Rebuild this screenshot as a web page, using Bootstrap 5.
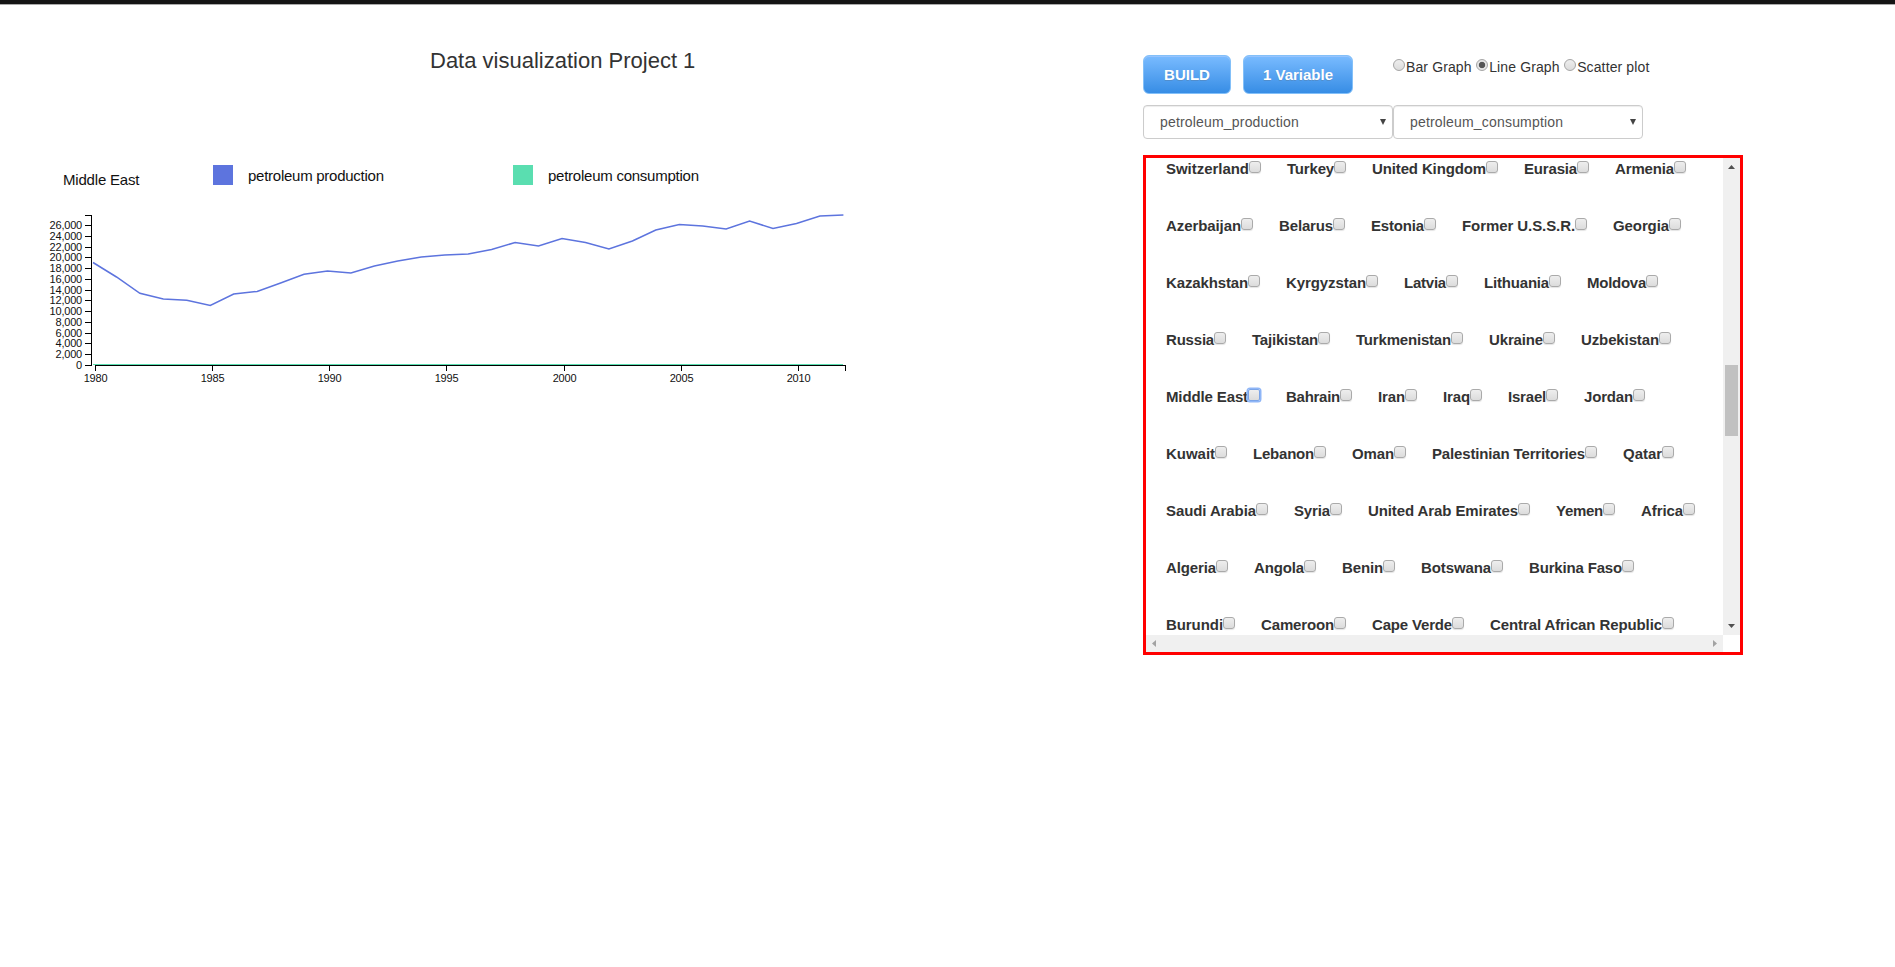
<!DOCTYPE html>
<html lang="en">
<head>
<meta charset="utf-8">
<title>Data visualization Project 1</title>
<link rel="stylesheet" href="https://cdn.jsdelivr.net/npm/bootstrap@5.3.0/dist/css/bootstrap.min.css">
<style>
body{font-family:"Liberation Sans",Arial,sans-serif;font-size:15px;color:#333;line-height:20px;height:967px;overflow:hidden}
.topbar{height:4px;background:#151515;box-shadow:0 1px 0 #aaa}
.chart-col{width:1143px;padding-top:43px}
.page-title{font-size:22px;line-height:28px;font-weight:400;padding-left:430px;margin:0}
.chart{display:block;font-family:"Liberation Sans",Arial,sans-serif}
.tools{width:600px;padding-top:51px}
.build-btn,.build-btn:hover{height:39px;border:1px solid #83c0f9;border-radius:6px;color:#fff;font-weight:700;font-size:15px;line-height:19px;padding:0;background:linear-gradient(#79bbff,#378de5);box-shadow:inset 0 1px 0 #97c4fe;text-shadow:0 1px 0 #528ecc}
.buttons{gap:12px}
.kinds{margin-left:28px;padding-top:2px;font-size:14px;gap:4.5px;letter-spacing:.12px}
.kinds label,.country{display:inline-flex}
.kinds input{appearance:none;width:12px;height:12px;border:1px solid #a5a5a5;border-radius:50%;background:linear-gradient(#eee,#dcdcdc);margin:2px 1px 0 0}
.kinds input:checked{background:radial-gradient(circle,#555 0 2.8px,#e4e4e4 3.6px)}
.picks{margin-top:11px}
.pick{width:250px;height:34px;border:1px solid #ccc;border-radius:4px;font-size:14px;letter-spacing:.18px;color:#555;padding:0 5px 0 16px;box-shadow:inset 0 1px 1px rgba(0,0,0,.075)}
.listbox{width:600px;height:500px;margin-top:16px;border:3px solid red;display:grid;grid-template:477px 17px/577px 17px}
.names{overflow:hidden;padding:1px 0 0 20px}
.names>div{height:57px;gap:25px;white-space:nowrap;font-weight:700}
.country input{appearance:none;width:12px;height:12px;border:1px solid #aaa;border-radius:3px;background:linear-gradient(#eee,#dcdcdc);box-shadow:0 1px 1px #e4e4e4;margin:2px 1px 0 0;flex:none}
.country input.focused{box-shadow:0 0 0 1.5px #8fb6f7;border-color:#7ba4e8;border-radius:2px}
.bar{background:#f0f0f0}
.thumb{width:13px;height:71px;background:#c1c1c1;margin-top:8px}
</style>
<script src="https://cdn.jsdelivr.net/npm/bootstrap@5.3.0/dist/js/bootstrap.bundle.min.js"></script>
</head>
<body class="bg-white">
<div class="topbar"></div>
<div class="d-flex">
<main class="chart-col">
<h1 class="page-title">Data visualization Project 1</h1>
<svg class="chart" id="chart" width="1100" height="320" viewBox="0 75 1100 320">
<rect x="213" y="165" width="20" height="20" fill="#5d74de"/><rect x="513" y="165" width="20" height="20" fill="#5adeb0"/>
<g font-size="15" fill="#111"><text x="63" y="185" textLength="76.5">Middle East</text><text x="248" y="181" textLength="136">petroleum production</text><text x="548" y="181" textLength="151">petroleum consumption</text></g>
</svg>
</main>
<aside class="tools">
<div class="d-flex align-items-start buttons">
<button class="btn build-btn" style="width:88px">BUILD</button>
<button class="btn build-btn" style="width:110px">1 Variable</button>
<div class="d-flex kinds">
<label><input type="radio" name="k">Bar Graph</label><label><input type="radio" name="k" checked>Line Graph</label><label><input type="radio" name="k">Scatter plot</label>
</div>
</div>
<div class="d-flex picks">
<div class="pick d-flex align-items-center justify-content-between">petroleum_production<svg width="8" height="8"><path d="M1 1h6L4 7z" fill="#444"/></svg></div>
<div class="pick d-flex align-items-center justify-content-between">petroleum_consumption<svg width="8" height="8"><path d="M1 1h6L4 7z" fill="#444"/></svg></div>
</div>
<div class="listbox">
<div class="names" id="names"></div>
<div class="bar d-flex flex-column align-items-center justify-content-between"><svg width="17" height="17"><path d="M5 11h7L8.500 7z" fill="#505050"/></svg><div class="thumb"></div><svg width="17" height="17"><path d="M5 6h7L8.500 10z" fill="#505050"/></svg></div>
<div class="bar d-flex justify-content-between"><svg width="17" height="17"><path d="M10 5v7L6 8.500z" fill="#a3a3a3"/></svg><svg width="17" height="17"><path d="M7 5v7L11 8.500z" fill="#a3a3a3"/></svg></div>
</div>
</aside>
</div>
<script>
// each country with the width of its name in pixels
const rows=["Switzerland:83|Turkey:47|United Kingdom:114|Eurasia:53|Armenia:59","Azerbaijan:75|Belarus:54|Estonia:53|Former U.S.S.R.:113|Georgia:56","Kazakhstan:82|Kyrgyzstan:80|Latvia:42|Lithuania:65|Moldova:59","Russia:48|Tajikistan:66|Turkmenistan:95|Ukraine:54|Uzbekistan:78","Middle East:82|Bahrain:54|Iran:27|Iraq:27|Israel:38|Jordan:49","Kuwait:49|Lebanon:61|Oman:42|Palestinian Territories:153|Qatar:39","Saudi Arabia:90|Syria:36|United Arab Emirates:150|Yemen:47|Africa:42","Algeria:50|Angola:50|Benin:41|Botswana:70|Burkina Faso:93","Burundi:57|Cameroon:73|Cape Verde:80|Central African Republic:172"];
document.getElementById("names").innerHTML=rows.map(r=>'<div class="d-flex">'+r.split("|").map(e=>{const [n,w]=e.split(":");return `<label class="country"><span data-w="${w}">${n}</span><input type="checkbox"${n=="Middle East"?' class="focused"':''}></label>`}).join("")+"</div>").join("");
document.querySelectorAll("[data-w]").forEach(e=>{const w=+e.dataset.w,n=e.getBoundingClientRect().width;e.style.letterSpacing=((w-n)/e.textContent.length).toFixed(3)+"px";e.style.width=w+"px"});
let s='<g stroke="#000" fill="none" shape-rendering="crispEdges"><path d="M85 215.500h6.500v150h-6.500M95.500 371v-5.500h750v5.500"/>',t='<g font-size="11" letter-spacing="-.2" fill="#111">';
for(let i=0;i<14;i++){const y=Math.floor(365.4-i*10.76);s+=`<path d="M85 ${y+.5}h6"/>`;t+=`<text x="82" y="${y+4}" text-anchor="end">${(i*2000).toLocaleString("en-US")}</text>`}
for(let i=0;i<7;i++){const x=Math.floor(95.3+i*117.2);s+=`<path d="M${x+.5} 365v6"/>`;t+=`<text x="${x+.5}" y="382" text-anchor="middle">${1980+i*5}</text>`}
const ys=[262.5,277,293.3,299,300.2,305.5,294,291.5,283,274.3,271,273,266,261,257,255,254,249.5,242.5,246,238.5,242.5,249,241,230,224.500,226,229,221,228.500,223.500,216,215];
const px=i=>(93+i*23.45).toFixed(1);
const extra=`<path d="M93 364.500H843" stroke="#5adeb0" shape-rendering="crispEdges"/><polyline fill="none" stroke="#5d74de" stroke-width="1.5" points="${ys.map((y,i)=>px(i)+","+y).join(" ")}"/>`;
document.getElementById("chart").insertAdjacentHTML("beforeend",extra+s+"</g>"+t+"</g>");
</script>
</body>
</html>
